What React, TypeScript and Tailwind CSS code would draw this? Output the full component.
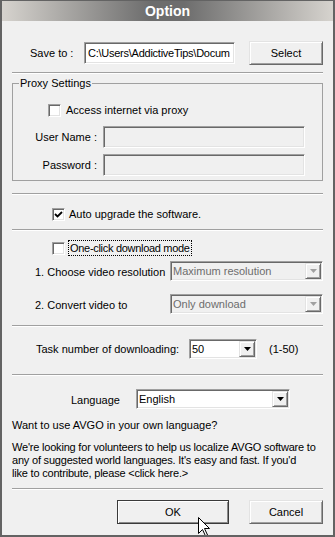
import * as React from "react";

const sunken =
  "border border-t-[#a0a0a0] border-l-[#a0a0a0] border-b-white border-r-white shadow-[inset_1px_1px_0_#696969,inset_-1px_-1px_0_#e3e3e3]";
const raised =
  "border border-t-[#e3e3e3] border-l-[#e3e3e3] border-b-[#696969] border-r-[#696969] shadow-[inset_1px_1px_0_#ffffff,inset_-1px_-1px_0_#a0a0a0] bg-[#f0f0f0]";

const Sep = ({ mt }: { mt: string }) => (
  <div className={`${mt} h-[2px] shrink-0 border-t border-t-[#a0a0a0] border-b border-b-white`} />
);

const Check = ({ checked }: { checked?: boolean }) => (
  <div className={`w-[13px] h-[13px] shrink-0 bg-white flex items-center justify-center ${sunken}`}>
    {checked && (
      <svg width="9" height="9" viewBox="0 0 9 9">
        <path d="M1 4 L3.5 6.5 L8 2" stroke="#000" strokeWidth="1.8" fill="none" />
      </svg>
    )}
  </div>
);

const Arrow = ({ disabled }: { disabled?: boolean }) => (
  <div className={`w-[16px] h-full shrink-0 flex items-center justify-center ${raised}`}>
    <svg width="7" height="4" viewBox="0 0 7 4">
      <path d="M0 0 H7 L3.5 4 Z" fill={disabled ? "#a0a0a0" : "#000"} />
    </svg>
  </div>
);

const Combo = ({ value, width, disabled }: { value: string; width: string; disabled?: boolean }) => (
  <div
    className={`${width} h-[20px] shrink-0 flex items-stretch ${sunken} ${
      disabled ? "bg-[#f0f0f0] text-[#6d6d6d]" : "bg-white text-black"
    }`}
  >
    <div className="flex-1 pl-[2px] flex items-center whitespace-nowrap overflow-hidden">{value}</div>
    <div className="p-[1px] h-full">
      <Arrow disabled={disabled} />
    </div>
  </div>
);

export default function App() {
  return (
    <div
      className="relative w-[335px] h-[537px] overflow-hidden bg-[#f0f0f0] border-t border-l-2 border-r-2 border-b-2 border-[#636363] text-[11px] leading-[13px] text-black"
      style={{ fontFamily: '"Liberation Sans", Arial, sans-serif' }}
    >
      {/* title bar */}
      <div className="h-[20px] flex items-center justify-center bg-[linear-gradient(to_right,#d6d3ce,#6d6d6d_45%,#6d6d6d_55%,#d6d3ce)]">
        <span className="text-white font-bold text-[14px]">Option</span>
      </div>

      <div className="flex flex-col pl-[10px] pr-[10px]">
        {/* save to */}
        <div className="mt-[20px] h-[24px] flex items-center">
          <span className="ml-[18px] w-[54px]">Save to :</span>
          <div className={`w-[151px] h-[22px] bg-white pl-[3px] flex items-center whitespace-nowrap overflow-hidden tracking-[-0.25px] ${sunken}`}>
            C:\Users\AddictiveTips\Docum
          </div>
          <button className={`ml-auto w-[74px] h-[24px] ${raised}`}>Select</button>
        </div>

        <Sep mt="mt-[7px]" />

        {/* proxy */}
        <fieldset className="mt-[3px] border border-[#a0a0a0] pb-[4px]">
          <legend className="ml-[6px] px-[1px] leading-[13px]">Proxy Settings</legend>
          <div className="mt-[14px] ml-[35px] h-[13px] flex items-center gap-[5px]">
            <Check />
            <span>Access internet via proxy</span>
          </div>
          <div className="mt-[9px] h-[22px] flex items-center">
            <span className="w-[84px] text-right">User Name :</span>
            <div className={`ml-[6px] w-[202px] h-[22px] ${sunken}`} />
          </div>
          <div className="mt-[6px] h-[22px] flex items-center">
            <span className="w-[84px] text-right">Password :</span>
            <div className={`ml-[6px] w-[202px] h-[22px] ${sunken}`} />
          </div>
        </fieldset>

        <Sep mt="mt-[12px]" />

        <div className="mt-[13px] ml-[40px] h-[13px] flex items-center gap-[4px]">
          <Check checked />
          <span>Auto upgrade the software.</span>
        </div>

        <Sep mt="mt-[8px]" />

        <div className="mt-[9px] ml-[40px] h-[16px] flex items-center gap-[3px]">
          <Check />
          <span className="h-[16px] px-[1px] flex items-center border border-dotted border-black tracking-[-0.3px]">
            One-click download mode
          </span>
        </div>

        <div className="mt-[5px] h-[20px] flex items-center">
          <span className="ml-[23px] w-[135px] pt-[3px]">1. Choose video resolution</span>
          <Combo value="Maximum resolution" width="w-[153px]" disabled />
        </div>
        <div className="mt-[13px] h-[20px] flex items-center">
          <span className="ml-[23px] w-[135px] pt-[2px]">2. Convert video to</span>
          <Combo value="Only download" width="w-[153px]" disabled />
        </div>

        <Sep mt="mt-[11px]" />

        <div className="mt-[12px] h-[20px] flex items-center">
          <span className="ml-[24px] w-[153px]">Task number of downloading:</span>
          <Combo value="50" width="w-[68px]" />
          <span className="ml-[12px]">(1-50)</span>
        </div>

        <Sep mt="mt-[15px]" />

        <div className="mt-[13px] h-[20px] flex items-center">
          <span className="ml-[59px] w-[65px] pt-[2px]">Language</span>
          <Combo value="English" width="w-[154px]" />
        </div>

        <p className="mt-[10px]">Want to use AVGO in your own language?</p>
        <p className="mt-[9px] tracking-[-0.2px]">
          We're looking for volunteers to help us localize AVGO software to
          <br />
          any of suggested world languages. It's easy and fast. If you'd
          <br />
          like to contribute, please &lt;click here.&gt;
        </p>

        <Sep mt="mt-[8px]" />

        <div className="mt-[10px] h-[24px] flex justify-end gap-[20px]">
          <button className="w-[112px] h-[24px] border border-[#3a3a3a] shadow-[inset_1px_1px_0_#ffffff,inset_-1px_-1px_0_#8a8a8a] bg-[#f0f0f0]">
            OK
          </button>
          <button className={`w-[74px] h-[24px] ${raised}`}>Cancel</button>
        </div>
      </div>

      {/* mouse pointer */}
      <svg className="absolute left-[196px] top-[516px]" width="13" height="20" viewBox="0 0 13 20">
        <path d="M0.5 0.5 V16.5 L4.5 12.5 L7.5 19 L9.5 18 L6.5 11.5 H11.5 Z" fill="#fff" stroke="#000" strokeWidth="1" />
      </svg>
    </div>
  );
}
